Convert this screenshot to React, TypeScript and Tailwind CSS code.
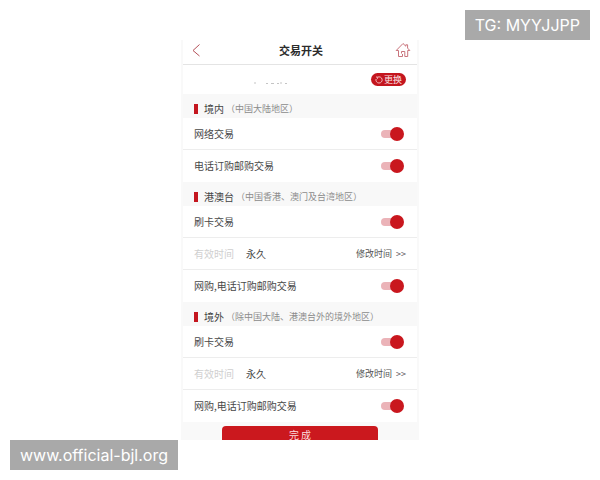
import React, { useState } from 'react';

type SwitchRowProps = {
	id: string;
	label: string;
}

const SwitchRow: React.FC<SwitchRowProps> = ({ id, label }) => {

	const [on, setOn] = useState(true);

	return <div className="flex h-8 items-center justify-between pl-[11px] pr-3">
		<label htmlFor={id} className="text-[#484848]">{label}</label>
		<input
			id={id}
			type="checkbox"
			checked={on}
			onChange={() => setOn(!on)}
			className="relative h-3.5 w-6 cursor-pointer appearance-none before:absolute before:left-0 before:top-[3px] before:h-2 before:w-4 before:rounded-full before:bg-[#ebb3b8] after:absolute after:left-0 after:top-0 after:size-3.5 after:rounded-full after:bg-[#c9171e] checked:after:left-[9px]"
		/>
	</div>
}

const PeriodRow: React.FC = () => {
	return <div className="flex h-8 items-center px-[11px]">
		<span className="text-[#cfcfcf]">有效时间</span>
		<span className="ml-3 text-[#484848]">永久</span>
		<button className="ml-auto flex cursor-pointer items-center gap-1 text-[9px] text-[#555]">
			<span>修改时间</span>
			<span>&gt;&gt;</span>
		</button>
	</div>
}

type RegionProps = {
	title: string;
	note: string;
	children: React.ReactNode;
}

const Region: React.FC<RegionProps> = ({ title, note, children }) => {
	return <section>
		<div className="flex h-6 items-center bg-[#f8f8f8] px-[11px] pt-1.5">
			<span className="mr-1.5 h-2.5 w-1 bg-[#c4161f]" />
			<h2 className="text-[#444]">{title}</h2>
			<span className="ml-0.5 text-[9px] text-[#8c8c8c]">（{note}）</span>
		</div>
		<div className="divide-y divide-[#ededed] bg-white">
			{children}
		</div>
	</section>
}

const App: React.FC = () => {
	return <div className="relative min-h-screen bg-white pt-10 font-['Noto_Sans_CJK_SC',sans-serif]">
		<main className="mx-auto w-full max-w-[238px] bg-[#f9f9f9] px-0.5 text-[10px] leading-4">
			<header className="flex h-[25px] items-center justify-between border-b border-[#e4e4e4] bg-white pb-1 pl-2 pr-1.5">
				<button aria-label="返回" className="w-4 cursor-pointer">
					<svg width="10" height="14" viewBox="0 0 10 14" fill="none" stroke="#b5525a" strokeWidth="1">
						<path d="M8.5 1.5 L2 7.5 L8.5 13" />
					</svg>
				</button>
				<h1 className="text-[11px] font-bold text-[#2c2c2c]">交易开关</h1>
				<button aria-label="首页" className="cursor-pointer">
					<svg width="16" height="16" viewBox="0 0 16 16" fill="none" stroke="#c9747c" strokeWidth="1" strokeLinejoin="round">
						<path d="M3.5 8.5 H1.2 L8 1.5 L10.8 4.2 V2.8 H12.6 V6.1 L14.8 8.5 H12.7 V14.5 H9.8 V9.5 H6.5 V11.5 M3.5 8.5 V14.5 H7.5 V12" />
					</svg>
				</button>
			</header>

			<div className="flex h-[29px] items-center justify-between bg-white pl-[70px] pr-[11px]">
				<svg width="36" height="4" viewBox="0 0 36 4" stroke="#c4c4c4" strokeWidth="1" className="mt-1.5">
					<path d="M2 1 V3 M13 2.5 H15 M18 2.5 H21 M24 2.5 H26 M28 1 V3 M32 2.5 H34" />
				</svg>
				<button className="flex h-[13px] cursor-pointer items-center gap-px rounded-full bg-[#c4161f] px-1 text-[9px] text-[#fbe3e4]">
					<svg width="8" height="8" viewBox="0 0 8 8" fill="none" stroke="#f3b9bc" strokeWidth="1">
						<path d="M2.6 1.2 A3.1 3.1 0 1 1 1.1 3 M1 1 L2.8 1.2 L2.4 2.8" />
					</svg>
					更换
				</button>
			</div>

			<Region title="境内" note="中国大陆地区">
				<SwitchRow id="cn-online" label="网络交易" />
				<SwitchRow id="cn-phone" label="电话订购邮购交易" />
			</Region>
			<Region title="港澳台" note="中国香港、澳门及台湾地区">
				<SwitchRow id="hmt-card" label="刷卡交易" />
				<PeriodRow />
				<SwitchRow id="hmt-online" label="网购,电话订购邮购交易" />
			</Region>
			<Region title="境外" note="除中国大陆、港澳台外的境外地区">
				<SwitchRow id="abroad-card" label="刷卡交易" />
				<PeriodRow />
				<SwitchRow id="abroad-online" label="网购,电话订购邮购交易" />
			</Region>

			<footer className="flex px-[39px] pt-1">
				<button className="h-3.5 w-full cursor-pointer rounded-t-sm bg-[#cb181e] pt-1 leading-[10px] text-[#fbdcdd]">完 成</button>
			</footer>
		</main>

		<div className="absolute right-2.5 top-2.5 bg-[#a9a9a9] px-2.5 py-[3px] font-[Inter,sans-serif] text-base text-white">TG: MYYJJPP</div>
		<div className="absolute left-2.5 top-[440px] bg-[#a9a9a9] px-2.5 py-[3px] font-[Inter,sans-serif] text-base text-white">www.official-bjl.org</div>
	</div>
}

export default App;
